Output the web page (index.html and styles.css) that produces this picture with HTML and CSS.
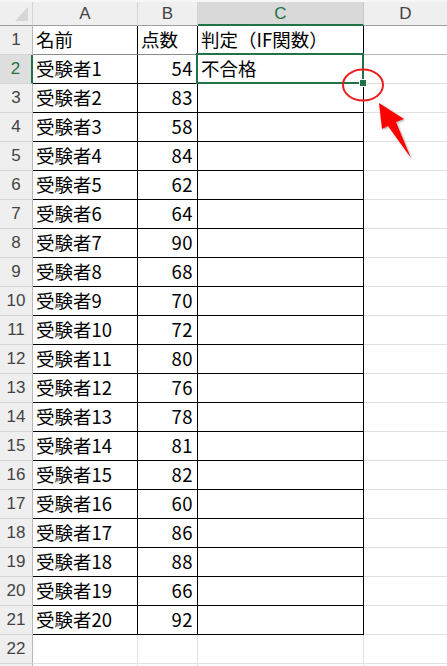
FILE: index.html
```html
<!DOCTYPE html>
<html lang="ja">
<head>
<meta charset="utf-8">
<link rel="stylesheet" href="styles.css">
</head>
<body>
<div class="sheet">
  <div class="row head">
    <div class="rh corner"><span class="tri"></span></div>
    <div class="ch a">A</div>
    <div class="ch b">B</div>
    <div class="ch c sel">C</div>
    <div class="ch d">D</div>
  </div>
  <div class="row r1">
    <div class="rh">1</div>
    <div class="cell a">名前</div>
    <div class="cell b">点数</div>
    <div class="cell c">判定（IF関数）</div>
    <div class="cell d"></div>
  </div>
  <div class="row">
    <div class="rh selrow">2</div>
    <div class="cell a">受験者1</div>
    <div class="cell b num">54</div>
    <div class="cell c">不合格</div>
    <div class="cell d"></div>
  </div>
  <div class="row"><div class="rh">3</div><div class="cell a">受験者2</div><div class="cell b num">83</div><div class="cell c"></div><div class="cell d"></div></div>
  <div class="row"><div class="rh">4</div><div class="cell a">受験者3</div><div class="cell b num">58</div><div class="cell c"></div><div class="cell d"></div></div>
  <div class="row"><div class="rh">5</div><div class="cell a">受験者4</div><div class="cell b num">84</div><div class="cell c"></div><div class="cell d"></div></div>
  <div class="row"><div class="rh">6</div><div class="cell a">受験者5</div><div class="cell b num">62</div><div class="cell c"></div><div class="cell d"></div></div>
  <div class="row"><div class="rh">7</div><div class="cell a">受験者6</div><div class="cell b num">64</div><div class="cell c"></div><div class="cell d"></div></div>
  <div class="row"><div class="rh">8</div><div class="cell a">受験者7</div><div class="cell b num">90</div><div class="cell c"></div><div class="cell d"></div></div>
  <div class="row"><div class="rh">9</div><div class="cell a">受験者8</div><div class="cell b num">68</div><div class="cell c"></div><div class="cell d"></div></div>
  <div class="row"><div class="rh">10</div><div class="cell a">受験者9</div><div class="cell b num">70</div><div class="cell c"></div><div class="cell d"></div></div>
  <div class="row"><div class="rh">11</div><div class="cell a">受験者10</div><div class="cell b num">72</div><div class="cell c"></div><div class="cell d"></div></div>
  <div class="row"><div class="rh">12</div><div class="cell a">受験者11</div><div class="cell b num">80</div><div class="cell c"></div><div class="cell d"></div></div>
  <div class="row"><div class="rh">13</div><div class="cell a">受験者12</div><div class="cell b num">76</div><div class="cell c"></div><div class="cell d"></div></div>
  <div class="row"><div class="rh">14</div><div class="cell a">受験者13</div><div class="cell b num">78</div><div class="cell c"></div><div class="cell d"></div></div>
  <div class="row"><div class="rh">15</div><div class="cell a">受験者14</div><div class="cell b num">81</div><div class="cell c"></div><div class="cell d"></div></div>
  <div class="row"><div class="rh">16</div><div class="cell a">受験者15</div><div class="cell b num">82</div><div class="cell c"></div><div class="cell d"></div></div>
  <div class="row"><div class="rh">17</div><div class="cell a">受験者16</div><div class="cell b num">60</div><div class="cell c"></div><div class="cell d"></div></div>
  <div class="row"><div class="rh">18</div><div class="cell a">受験者17</div><div class="cell b num">86</div><div class="cell c"></div><div class="cell d"></div></div>
  <div class="row"><div class="rh">19</div><div class="cell a">受験者18</div><div class="cell b num">88</div><div class="cell c"></div><div class="cell d"></div></div>
  <div class="row"><div class="rh">20</div><div class="cell a">受験者19</div><div class="cell b num">66</div><div class="cell c"></div><div class="cell d"></div></div>
  <div class="row"><div class="rh">21</div><div class="cell a">受験者20</div><div class="cell b num">92</div><div class="cell c"></div><div class="cell d"></div></div>
  <div class="row empty"><div class="rh">22</div><div class="cell a"></div><div class="cell b"></div><div class="cell c"></div><div class="cell d"></div></div>
  <div class="row empty"><div class="rh"></div><div class="cell a"></div><div class="cell b"></div><div class="cell c"></div><div class="cell d"></div></div>

  <div class="selection"><span class="handle"></span></div>
  <svg class="marks" width="447" height="666" viewBox="0 0 447 666">
    <defs>
      <filter id="sh" x="-50%" y="-50%" width="200%" height="200%">
        <feDropShadow dx="1" dy="1" stdDeviation="1.2" flood-color="#000" flood-opacity="0.35"/>
      </filter>
    </defs>
    <ellipse cx="363" cy="85" rx="20" ry="15.5" fill="none" stroke="#ee1c1c" stroke-width="2"/>
    <polygon points="379,103 404,119 396,122 411,158 388,126 382,129" fill="#ff0000" filter="url(#sh)"/>
  </svg>
</div>
</body>
</html>
```

FILE: styles.css
```css
html, body {
  margin: 0;
  padding: 0;
  background: #ffffff;
}

.sheet {
  position: relative;
  width: 447px;
  height: 666px;
  overflow: hidden;
  font-family: "Noto Sans CJK JP", "Noto Sans", sans-serif;
  color: #000;
  border-top: 2px solid #f7f7f7;
  box-sizing: border-box;
}

.row {
  display: flex;
  height: 29px;
}

.row.head {
  height: 24px;
}

.rh, .ch, .cell {
  box-sizing: border-box;
  flex: none;
  overflow: hidden;
  white-space: nowrap;
}

.a { width: 105px; }
.b { width: 60px; }
.c { width: 166px; }
.d { flex: 1 1 auto; }

/* column headers */
.ch {
  background: #efefef;
  border-right: 1px solid #d4d4d4;
  border-bottom: 1px solid #9e9e9e;
  font-family: "Liberation Sans", "DejaVu Sans", sans-serif;
  font-size: 17px;
  color: #444;
  text-align: center;
  line-height: 24px;
  font-weight: normal;
}

.ch.d {
  border-right: none;
}

.ch.sel {
  background: #d9d9d9;
  color: #217346;
  border-bottom: 2px solid #217346;
  border-right-color: #c8c8c8;
}

/* row headers */
.rh {
  width: 33px;
  background: #efefef;
  border-right: 1px solid #b8b8b8;
  border-bottom: 1px solid #d4d4d4;
  font-family: "Liberation Sans", "DejaVu Sans", sans-serif;
  font-size: 17px;
  color: #444;
  text-align: center;
  line-height: 28px;
}

.rh.corner {
  position: relative;
  border-bottom: 1px solid #9e9e9e;
  border-right-color: #d4d4d4;
}

.tri {
  position: absolute;
  right: 4px;
  bottom: 4px;
  width: 0;
  height: 0;
  border-left: 13px solid transparent;
  border-bottom: 14px solid #d6d6d6;
}

.rh.selrow {
  background: #dedede;
  color: #217346;
  border-right: 2px solid #217346;
}

/* data cells */
.cell {
  border-right: 1px solid #000;
  border-bottom: 1px solid #000;
  font-size: 18.5px;
  line-height: 27px;
  padding: 0 4px 0 3px;
}

.cell.d {
  border-right: none;
  border-bottom: 1px solid #e1e1e1;
}

.cell.num {
  text-align: right;
  padding-right: 4px;
  letter-spacing: 0.5px;
}

.r1 .cell {
  border-bottom-color: #8a8a8a;
}

.r1 .cell.d {
  border-bottom-color: #b5b5b5;
}

.row.empty .cell {
  border-right: 1px solid #e1e1e1;
  border-bottom: 1px solid #e1e1e1;
}

.row.empty .cell.d {
  border-right: none;
}

/* active cell overlay */
.selection {
  position: absolute;
  left: 196px;
  top: 51px;
  width: 168px;
  height: 31px;
  border: 2px solid #217346;
  box-sizing: border-box;
  pointer-events: none;
}

.handle {
  position: absolute;
  right: -5px;
  bottom: -5px;
  width: 6px;
  height: 6px;
  background: #217346;
  border: 1px solid #fff;
}

.marks {
  position: absolute;
  left: 0;
  top: -2px;
  pointer-events: none;
}
```
